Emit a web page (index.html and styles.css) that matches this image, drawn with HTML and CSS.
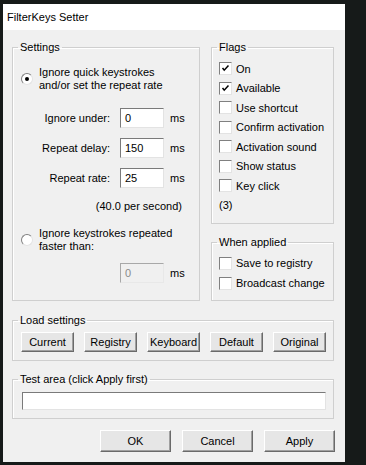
FILE: index.html
```html
<!DOCTYPE html>
<html lang="en">
<head>
  <meta charset="UTF-8" />
  <title>FilterKeys Setter</title>
  <link rel="stylesheet" href="styles.css">
</head>
<body>
  <div class="window">
    <div class="titlebar">FilterKeys Setter</div>

    <div class="client">
      <div class="main">
        <fieldset class="group settings">
          <legend>Settings</legend>

          <div class="option first">
            <span class="radio checked"></span>
            <span>Ignore quick keystrokes<br>and/or set the repeat rate</span>
          </div>

          <div class="fields">
            <label>Ignore under:</label>
            <span class="input">0</span>
            <span class="unit">ms</span>

            <label>Repeat delay:</label>
            <span class="input">150</span>
            <span class="unit">ms</span>

            <label>Repeat rate:</label>
            <span class="input">25</span>
            <span class="unit">ms</span>
          </div>

          <div class="rate">(40.0 per second)</div>

          <div class="option second">
            <span class="radio"></span>
            <span>Ignore keystrokes repeated<br>faster than:</span>
          </div>

          <div class="fields last">
            <label></label>
            <span class="input disabled">0</span>
            <span class="unit">ms</span>
          </div>
        </fieldset>

        <div class="side">
          <fieldset class="group flags">
            <legend>Flags</legend>
            <div class="list">
              <div class="check-row"><span class="check on"><svg viewBox="0 0 13 13"><path d="M3 6l2 2.5 5-5.5" /></svg></span>On</div>
              <div class="check-row"><span class="check on"><svg viewBox="0 0 13 13"><path d="M3 6l2 2.5 5-5.5" /></svg></span>Available</div>
              <div class="check-row"><span class="check"></span>Use shortcut</div>
              <div class="check-row"><span class="check"></span>Confirm activation</div>
              <div class="check-row"><span class="check"></span>Activation sound</div>
              <div class="check-row"><span class="check"></span>Show status</div>
              <div class="check-row"><span class="check"></span>Key click</div>
              <div class="check-row count">(3)</div>
            </div>
          </fieldset>

          <fieldset class="group applied">
            <legend>When applied</legend>
            <div class="list">
              <div class="check-row"><span class="check"></span>Save to registry</div>
              <div class="check-row"><span class="check"></span>Broadcast change</div>
            </div>
          </fieldset>
        </div>
      </div>

      <fieldset class="group load">
        <legend>Load settings</legend>
        <div class="load-buttons">
          <button class="btn small">Current</button>
          <button class="btn small">Registry</button>
          <button class="btn small">Keyboard</button>
          <button class="btn small">Default</button>
          <button class="btn small">Original</button>
        </div>
      </fieldset>

      <fieldset class="group test">
        <legend>Test area (click Apply first)</legend>
        <div class="input wide"></div>
      </fieldset>

      <div class="actions">
        <button class="btn">OK</button>
        <button class="btn">Cancel</button>
        <button class="btn">Apply</button>
      </div>
    </div>
  </div>
</body>
</html>
```

FILE: styles.css
```css
body {
  margin: 0;
  padding: 4px 0 0 3px;
  background-color: #161a19;
  font-family: 'Liberation Sans', Arial, sans-serif;
  font-size: 11px;
  color: #000;
}

.window {
  width: 342px;
  height: 458px;
  background-color: #f0f0f0;
}

.titlebar {
  height: 26px;
  line-height: 26px;
  padding-left: 4px;
  background-color: #fff;
  font-size: 11px;
}

.client {
  padding: 11px 11px 0 9px;
}

.main {
  display: flex;
  gap: 11px;
}

/* group boxes */
.group {
  margin: 0;
  padding: 0;
  border: 1px solid #cfcfcf;
  box-shadow: inset 1px 1px 0 #fff;
  box-sizing: border-box;
}

.group legend {
  margin-left: 5px;
  padding: 0 2px;
  line-height: 13px;
  font-size: 11px;
}

.settings {
  width: 188px;
  height: 260px;
}

.side {
  width: 123px;
  display: flex;
  flex-direction: column;
}

.flags {
  height: 183px;
}

.applied {
  margin-top: 12px;
  height: 65px;
}

/* radio options */
.option {
  display: flex;
  align-items: center;
  gap: 6px;
  margin-left: 8px;
  line-height: 13px;
}

.option.first {
  margin-top: 12px;
}

.option.second {
  margin-top: 14px;
}

.radio {
  width: 12px;
  height: 12px;
  border-radius: 50%;
  background-color: #fff;
  border: 1px solid;
  border-color: #808080 #e3e3e3 #e3e3e3 #808080;
  box-sizing: border-box;
  position: relative;
  flex: none;
}

.radio.checked::after {
  content: "";
  position: absolute;
  left: 3px;
  top: 3px;
  width: 4px;
  height: 4px;
  border-radius: 50%;
  background-color: #000;
}

/* numeric fields */
.fields {
  display: grid;
  grid-template-columns: 107px 44px auto;
  grid-auto-rows: 20px;
  row-gap: 10px;
  align-items: center;
  margin-top: 16px;
}

.fields.last {
  margin-top: 10px;
}

.fields label {
  text-align: right;
  padding-right: 10px;
}

.fields label,
.fields .unit {
  line-height: 20px;
}

.fields .unit {
  padding-left: 6px;
}

.input {
  display: block;
  height: 20px;
  line-height: 18px;
  padding-left: 4px;
  background-color: #fff;
  border: 1px solid;
  border-color: #7a7a7a #e3e3e3 #e3e3e3 #7a7a7a;
  box-sizing: border-box;
}

.input.disabled {
  color: #8a8a8a;
  background-color: #f0f0f0;
  border-color: #a8a8a8 #e8e8e8 #e8e8e8 #a8a8a8;
}

.rate {
  margin-top: 12px;
  line-height: 13px;
  text-align: right;
  padding-right: 17px;
}

/* checkboxes */
.list {
  padding-left: 7px;
}

.flags .list {
  margin-top: 5px;
}

.applied .list {
  margin-top: 4px;
}

.check-row {
  display: flex;
  align-items: center;
  gap: 4px;
  height: 19.5px;
}

.applied .check-row {
  height: 20px;
}

.check {
  width: 13px;
  height: 13px;
  background-color: #fff;
  border: 1px solid;
  border-color: #808080 #e3e3e3 #e3e3e3 #808080;
  box-sizing: border-box;
  flex: none;
}

.check svg {
  display: block;
  width: 11px;
  height: 11px;
  fill: none;
  stroke: #000;
  stroke-width: 1.8;
}

/* buttons */
.btn {
  width: 71px;
  height: 22px;
  padding: 0;
  font-family: inherit;
  font-size: 11px;
  color: #000;
  background-color: #e6e6e6;
  border: 1px solid;
  border-color: #fff #6a6a6a #6a6a6a #fff;
  box-shadow: inset -1px -1px 0 #a0a0a0;
}

.btn.small {
  width: 53px;
  height: 20px;
}

.load {
  margin-top: 13px;
  height: 47px;
}

.load-buttons {
  display: flex;
  gap: 10px;
  margin: 5px 0 0 8px;
}

.test {
  margin-top: 12px;
  height: 46px;
}

.input.wide {
  width: 304px;
  height: 18px;
  margin: 6px 0 0 9px;
}

.actions {
  display: flex;
  justify-content: flex-end;
  gap: 11px;
  margin: 11px -1px 0 0;
}
```
